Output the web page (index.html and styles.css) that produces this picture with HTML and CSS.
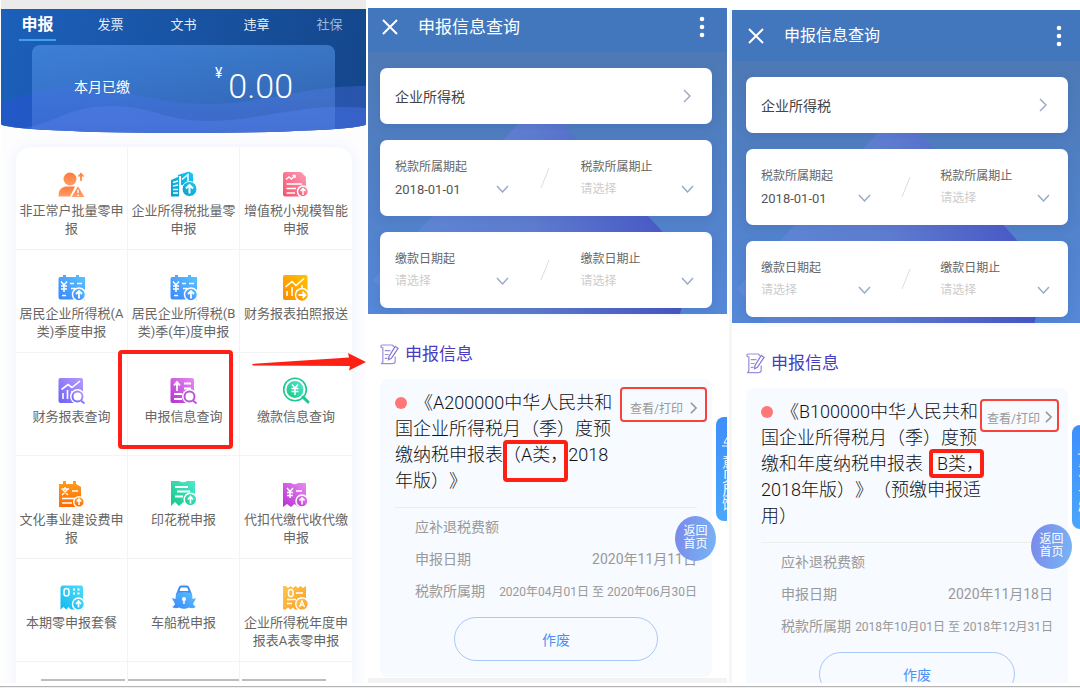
FILE: index.html
```html
<!DOCTYPE html>
<html lang="zh-CN">
<head>
  <meta charset="UTF-8" />
  <meta name="viewport" content="width=device-width, initial-scale=1.0"/>
  <title>申报信息查询</title>
  <link rel="stylesheet" href="styles.css">
</head>
<body>
  <svg class="defs" width="0" height="0" aria-hidden="true">
    <defs>
      <linearGradient id="orange" x1="0" y1="0" x2="0" y2="1"><stop offset="0" stop-color="#ff7a3c"/><stop offset="1" stop-color="#ff9f6a"/></linearGradient>
      <linearGradient id="cyan" x1="0" y1="1" x2="1" y2="0"><stop offset="0" stop-color="#0e9cc4"/><stop offset="1" stop-color="#16c8f5"/></linearGradient>
      <linearGradient id="pink" x1="0" y1="1" x2="1" y2="0"><stop offset="0" stop-color="#f8506c"/><stop offset="1" stop-color="#fb9db8"/></linearGradient>
      <linearGradient id="blue" x1="0" y1="1" x2="1" y2="0"><stop offset="0" stop-color="#3a86fb"/><stop offset="1" stop-color="#5cc4fd"/></linearGradient>
      <linearGradient id="amber" x1="0" y1="1" x2="1" y2="0"><stop offset="0" stop-color="#ff8a00"/><stop offset="1" stop-color="#ffc400"/></linearGradient>
      <linearGradient id="violet" x1="0" y1="1" x2="1" y2="0"><stop offset="0" stop-color="#6d62f7"/><stop offset="1" stop-color="#b79bfd"/></linearGradient>
      <linearGradient id="magenta" x1="0" y1="1" x2="1" y2="0"><stop offset="0" stop-color="#b62fd2"/><stop offset="1" stop-color="#e58df0"/></linearGradient>
      <linearGradient id="green" x1="0" y1="1" x2="1" y2="0"><stop offset="0" stop-color="#16c784"/><stop offset="1" stop-color="#4fe8d0"/></linearGradient>
      <linearGradient id="deep" x1="0" y1="1" x2="0" y2="0"><stop offset="0" stop-color="#ff6a00"/><stop offset="1" stop-color="#ff9d1f"/></linearGradient>
      <linearGradient id="sky" x1="0" y1="1" x2="1" y2="0"><stop offset="0" stop-color="#12b9ee"/><stop offset="1" stop-color="#4fdcf8"/></linearGradient>
      <linearGradient id="gold" x1="0" y1="0" x2="1" y2="1"><stop offset="0" stop-color="#fdc94a"/><stop offset="1" stop-color="#fb9a2c"/></linearGradient>
      <linearGradient id="peak" x1="0" y1="0" x2="1" y2="0"><stop offset="0" stop-color="#5f8bd8"/><stop offset="0.5" stop-color="#5f7dd0"/><stop offset="1" stop-color="#4654c6"/></linearGradient>
      <linearGradient id="sea" x1="0" y1="0" x2="1" y2="0"><stop offset="0" stop-color="#2457cc"/><stop offset="1" stop-color="#2f59b5"/></linearGradient>
    </defs>
  </svg>

  <div class="board">
    <section class="phone home">
      <header class="home-hero">
        <svg class="waves" viewBox="0 0 365 124" preserveAspectRatio="none" aria-hidden="true">
          <path d="M0 94C30 84 50 77 75 77C120 77 150 95 205 95C265 95 300 77 365 77V124H0Z" fill="url(#sea)" opacity=".75"/>
          <path d="M0 122C60 117 60 97 112 97C150 97 165 112 205 112C255 112 290 98 335 98C350 98 360 98 365 99V124H0Z" fill="#3f6ddb" opacity=".6"/>
        </svg>
        <nav class="tabs">
          <a href="#" class="tab active">申报</a>
          <a href="#" class="tab">发票</a>
          <a href="#" class="tab">文书</a>
          <a href="#" class="tab">违章</a>
          <a href="#" class="tab faded">社保</a>
        </nav>
        <div class="paid">
          <span class="paid-label">本月已缴</span>
          <span class="paid-sum"><sup>¥</sup>0.00</span>
        </div>
      </header>

      <div class="menu">
        <a href="#" class="item">
          <svg class="icon" viewBox="0 0 28 28"><g fill="url(#orange)"><circle cx="12" cy="8" r="6.5"/><path d="M.5 25.5C.5 18 4 15.500 10 15.500H17L12 25.500Z"/><path d="M20 15.500 26.500 26H13.500Z"/><path d="M23 1.500 26.500 5.500H24V10H22V5.500H19.500Z"/></g><path d="M20 18.500V22M20 23.500V25" stroke="#fff" stroke-width="1.500"/></svg>
          <span>非正常户批量零申报</span>
        </a>
        <a href="#" class="item">
          <svg class="icon" viewBox="0 0 28 28"><path d="M1 25.500V9L9 5.500V25.500ZM8 5.500V4L19 .5 23 3V14H11V5Z" fill="url(#cyan)"/><path d="M3 11.500 8 10M3 15 8 14M3 18.500H8M3 22H8M12 8.500 18 3.500V10" stroke="#fff" stroke-width="1.500" fill="none"/><circle cx="19.500" cy="18" r="7.500" fill="url(#cyan)" stroke="#fff"/><path d="M19.500 22.500V14.500M16 17.500 19.500 14 23 17.500" stroke="#fff" stroke-width="2" fill="none"/></svg>
          <span>企业所得税批量零申报</span>
        </a>
        <a href="#" class="item">
          <svg class="icon" viewBox="0 0 28 28"><path d="M3 1H19L24 6V25.500H3Q1 25.500 1 23.500V3Q1 1 3 1Z" fill="url(#pink)"/><path d="M4 8.500 7 6 9.500 8 13 4.500M10.500 4.500H13V7M4.500 13H20M4.500 17.500H14M4.500 22H13" stroke="#fff" stroke-width="1.500" fill="none"/><circle cx="21" cy="20.500" r="5.500" fill="url(#pink)" stroke="#fff" stroke-width="1.500"/><path d="M21 24V18M18.500 20 21 17.500 23.500 20" stroke="#fff" stroke-width="1.500" fill="none"/></svg>
          <span>增值税小规模智能申报</span>
        </a>

        <a href="#" class="item">
          <svg class="icon" viewBox="0 0 28 28"><path d="M2 3H5V1H8V3H18V1H21V3H27V25.500H3Q.5 25.500 .5 23V5Q.5 3 2 3Z" fill="url(#blue)"/><path d="M3 7.500 6 11 9 7.500M3 12H9M3 15H9M6 11V18M12 9.500H16M19 9.500H24M13 14.500H17M4 21.500H8" stroke="#fff" stroke-width="1.500" fill="none"/><circle cx="21" cy="20.500" r="6.500" fill="url(#blue)" stroke="#fff" stroke-width="1.500"/><path d="M21 24.500V17.500M18 20 21 17 24 20" stroke="#fff" stroke-width="1.800" fill="none"/></svg>
          <span>居民企业所得税(A类)季度申报</span>
        </a>
        <a href="#" class="item">
          <svg class="icon" viewBox="0 0 28 28"><path d="M2 3H5V1H8V3H18V1H21V3H27V25.500H3Q.5 25.500 .5 23V5Q.5 3 2 3Z" fill="url(#blue)"/><path d="M3 7.500 6 11 9 7.500M3 12H9M3 15H9M6 11V18M12 9.500H16M19 9.500H24M13 14.500H17M4 21.500H8" stroke="#fff" stroke-width="1.500" fill="none"/><circle cx="21" cy="20.500" r="6.500" fill="url(#blue)" stroke="#fff" stroke-width="1.500"/><path d="M21 24.500V17.500M18 20 21 17 24 20" stroke="#fff" stroke-width="1.800" fill="none"/></svg>
          <span>居民企业所得税(B类)季(年)度申报</span>
        </a>
        <a href="#" class="item">
          <svg class="icon" viewBox="0 0 28 28"><rect x="1" y="1" width="24.500" height="25" rx="2" fill="url(#amber)"/><path d="M3.500 13 10 7.500 14 11.500 22 4.500M5 17V22M10 13V22M15 16V22M20 11V15" stroke="#fff" stroke-width="1.600" fill="none"/><circle cx="20" cy="21" r="6.500" fill="url(#amber)" stroke="#fff" stroke-width="1.500"/><path d="M16.500 21H23M20.500 18 23.500 21 20.500 24" stroke="#fff" stroke-width="1.800" fill="none"/></svg>
          <span>财务报表拍照报送</span>
        </a>

        <a href="#" class="item">
          <svg class="icon" viewBox="0 0 28 28"><rect x=".5" y="1" width="24.500" height="25" rx="2" fill="url(#violet)"/><path d="M3.500 12.500 10 7.500 14 10.500 22 4M5 16V22M9.500 13V22M14 14V16" stroke="#fff" stroke-width="1.600" fill="none"/><circle cx="19.500" cy="19.500" r="7.500" fill="#fff"/><circle cx="19.500" cy="19.500" r="5" fill="none" stroke="url(#violet)" stroke-width="2"/><path d="M23 23.500 26.500 26.500" stroke="#8b7bf5" stroke-width="1.800"/></svg>
          <span>财务报表查询</span>
        </a>
        <a href="#" class="item boxed">
          <svg class="icon" viewBox="0 0 28 28"><rect x=".5" y="1" width="23.500" height="25" rx="2" fill="url(#magenta)"/><path d="M7 14V6M4 8.500 7 5 10 8.500M14 6.500H21M14 11.500H21M4 17H12M4 22H12" stroke="#fff" stroke-width="1.800" fill="none"/><circle cx="19.500" cy="19.500" r="7.500" fill="#fff"/><circle cx="19.500" cy="19.500" r="5" fill="none" stroke="#c04fd9" stroke-width="2"/><path d="M23 23.500 26.500 26.500" stroke="#c04fd9" stroke-width="1.800"/></svg>
          <span>申报信息查询</span>
        </a>
        <a href="#" class="item">
          <svg class="icon" viewBox="0 0 28 28"><circle cx="13" cy="12.500" r="11.300" fill="none" stroke="#1cc893" stroke-width="1.600"/><circle cx="13" cy="12.500" r="8.500" fill="url(#green)"/><path d="M10 7.500 13 11 16 7.500M9.500 11.500H16.500M9.500 14.500H16.500M13 11V18" stroke="#fff" stroke-width="1.500" fill="none"/><path d="M21 20 26 25" stroke="#1cc893" stroke-width="3" stroke-linecap="round"/></svg>
          <span>缴款信息查询</span>
          <svg class="arrow" viewBox="0 0 114 18" aria-hidden="true"><path d="M0 11 97 4.500 96 0 114 9 97 17.500 98 13 1 12.500Z" fill="#ff2015"/></svg>
        </a>

        <a href="#" class="item">
          <svg class="icon" viewBox="0 0 28 28"><path d="M1 4H5V1H8V4H15V1H18V4L23 7V27H1Z" fill="url(#deep)"/><path d="M3.500 9H11M7 7V9M10 9 4 15M5 10 10 15M14 11H20M4 18.500H19M4 23H14" stroke="#fff" stroke-width="1.400" fill="none"/><circle cx="21" cy="22" r="5.300" fill="url(#deep)" stroke="#fff" stroke-width="1.500"/><path d="M21 25V20M18.800 21.500 21 19 23.200 21.500" stroke="#fff" stroke-width="1.500" fill="none"/></svg>
          <span>文化事业建设费申报</span>
        </a>
        <a href="#" class="item">
          <svg class="icon" viewBox="0 0 28 28"><path d="M1 1H9Q13 3.500 17 1H25V25L22 22 18 26 13.500 22 9 26 5 22 1 26Z" fill="url(#green)"/><path d="M5 7H18M7 11.500H20M5 16.500H13" stroke="#fff" stroke-width="1.800" fill="none"/><circle cx="20.500" cy="19.500" r="6.300" fill="url(#green)" stroke="#fff" stroke-width="1.500"/><path d="M20.500 23.500V17M18 19.500 20.500 16.500 23 19.500" stroke="#fff" stroke-width="1.700" fill="none"/></svg>
          <span>印花税申报</span>
        </a>
        <a href="#" class="item">
          <svg class="icon" viewBox="0 0 28 28"><path d="M1 3H9Q12.500 5.500 16 3H24V26L20 24 16.500 27 12.500 24 9 27 5 24 1 27Z" fill="url(#magenta)"/><path d="M5 8 8 11.500 11 8M5 12.500H11M5 15.500H11M8 11V18M14 11H20" stroke="#fff" stroke-width="1.500" fill="none"/><circle cx="20" cy="21" r="6" fill="url(#magenta)" stroke="#fff" stroke-width="1.500"/><path d="M20 24.500V18.500M17.500 20.500 20 18 22.500 20.500" stroke="#fff" stroke-width="1.600" fill="none"/></svg>
          <span>代扣代缴代收代缴申报</span>
        </a>

        <a href="#" class="item">
          <svg class="icon" viewBox="0 0 28 28"><path d="M5 2.500H23Q25 2.500 25 4.500V26.500H13L10.500 24 8 26.500 5.500 24 2.500 26.500V5Q2.500 2.500 5 2.500Z" fill="url(#sky)"/><rect x="6" y="5.500" width="5" height="7.500" rx="2.500" fill="none" stroke="#fff" stroke-width="1.500"/><path d="M15 6.500H17M19.500 6.500H21.500M15 10.500H17M19.500 10.500H21.500" stroke="#fff" stroke-width="1.800"/><circle cx="20.500" cy="21" r="6" fill="url(#sky)" stroke="#fff" stroke-width="1.500"/><path d="M20.500 24.500V18.500M18 21 20.500 18 23 21" stroke="#fff" stroke-width="1.700" fill="none"/></svg>
          <span>本期零申报套餐</span>
        </a>
        <a href="#" class="item">
          <svg class="icon" viewBox="0 0 28 28"><path d="M8 9 9.500 5Q10 3.500 11.500 3.500H16.500Q18 3.500 18.500 5L20 9Z" fill="none" stroke="#3b8af5" stroke-width="2"/><path d="M6 10 14 9 22 10 22.500 16 26 15 23 21Q25 24 26 24 23 26 19 24.500 14 27 9 24.500 5 26 2 24 4 24 5 21L2 15 5.500 16Z" fill="url(#blue)"/><circle cx="14" cy="16" r="2" fill="#fff"/><path d="M14 17V21" stroke="#fff" stroke-width="1.500"/></svg>
          <span>车船税申报</span>
        </a>
        <a href="#" class="item">
          <svg class="icon" viewBox="0 0 28 28"><path d="M1 3H4L6 5 8.500 3 11 5 13.500 3 16 5 18.500 3 21 5 24 3V26.500H13L11 24.500 8.500 26.500 6 24.500 3.500 26.500H1Z" fill="url(#gold)"/><rect x="6.500" y="6.500" width="4.500" height="7" rx="2.200" fill="none" stroke="#fff" stroke-width="1.400"/><path d="M14 10H21M5 16.500H14M5 20.500H10" stroke="#fff" stroke-width="1.600"/><circle cx="20" cy="21" r="6.300" fill="url(#gold)" stroke="#fff" stroke-width="1.400"/><path d="M17.500 24 20 18 22.500 24M18.500 22.200H21.500" stroke="#fff" stroke-width="1.300" fill="none"/></svg>
          <span>企业所得税年度申报表A表零申报</span>
        </a>

        <div class="item last"><span class="bar bar-start"></span></div>
        <div class="item last"><span class="bar"></span></div>
        <div class="item last"><span class="bar bar-end"></span></div>
      </div>
    </section>

    <section class="phone query">
      <header class="bar-top">
        <button class="close" aria-label="关闭"><svg viewBox="0 0 16 16" width="16" height="16"><path d="M1 1 15 15M15 1 1 15" stroke="#fff" stroke-width="2"/></svg></button>
        <h1>申报信息查询</h1>
        <button class="more" aria-label="更多"><svg viewBox="0 0 6 22" width="6" height="22"><g fill="#fff"><circle cx="3" cy="3" r="2.300"/><circle cx="3" cy="11" r="2.300"/><circle cx="3" cy="19" r="2.300"/></g></svg></button>
      </header>
      <form class="filters">
        <svg class="peak" viewBox="0 0 359 262" preserveAspectRatio="none" aria-hidden="true"><path d="M150 72Q172 40 196 74L293 178 322 222 312 262H37L5 228Z" fill="url(#peak)"/></svg>
        <button type="button" class="card tax">企业所得税<svg viewBox="0 0 8 14" width="8" height="14"><path d="M1 1 7 7 1 13" fill="none" stroke="#9aacc6" stroke-width="1.500"/></svg></button>
        <div class="card range">
          <div class="field">
            <label for="a1">税款所属期起</label>
            <div class="pick"><select id="a1"><option>2018-01-01</option></select><svg viewBox="0 0 13 8" width="13" height="8"><path d="M1 1 6.500 7 12 1" fill="none" stroke="#9aacc6" stroke-width="1.500"/></svg></div>
          </div>
          <svg class="slash" viewBox="0 0 10 20" width="10" height="20"><path d="M9 0 1 20" stroke="#ddd"/></svg>
          <div class="field">
            <label for="a2">税款所属期止</label>
            <div class="pick"><select id="a2" class="empty"><option>请选择</option></select><svg viewBox="0 0 13 8" width="13" height="8"><path d="M1 1 6.500 7 12 1" fill="none" stroke="#9aacc6" stroke-width="1.500"/></svg></div>
          </div>
        </div>
        <div class="card range">
          <div class="field">
            <label for="a3">缴款日期起</label>
            <div class="pick"><select id="a3" class="empty"><option>请选择</option></select><svg viewBox="0 0 13 8" width="13" height="8"><path d="M1 1 6.500 7 12 1" fill="none" stroke="#9aacc6" stroke-width="1.500"/></svg></div>
          </div>
          <svg class="slash" viewBox="0 0 10 20" width="10" height="20"><path d="M9 0 1 20" stroke="#ddd"/></svg>
          <div class="field">
            <label for="a4">缴款日期止</label>
            <div class="pick"><select id="a4" class="empty"><option>请选择</option></select><svg viewBox="0 0 13 8" width="13" height="8"><path d="M1 1 6.500 7 12 1" fill="none" stroke="#9aacc6" stroke-width="1.500"/></svg></div>
          </div>
        </div>
      </form>
      <div class="results">
        <h2><svg viewBox="0 0 20 22" width="19" height="21"><path d="M14 3V2Q14 1 13 1H3Q1 1 1 2.500T3 4V18Q3 20.500 1 20.500H13Q16 20.500 16 18V13M5 7H11M5 11H9M5 15H8" fill="none" stroke="#9a8fdc" stroke-width="1.300"/><path d="M16 2.500 19 4.500 12 15 9 16.500 9.500 13Z" fill="none" stroke="#8378d6" stroke-width="1.300"/></svg>申报信息</h2>
        <article class="result">
          <div class="head">
            <h3><i class="dot"></i>《A200000中华人民共和<br>国企业所得税月（季）度预<br>缴纳税申报表<span class="mark mark-tall">（A类，</span>2018<br>年版）》</h3>
            <button class="view">查看/打印<svg viewBox="0 0 8 14" width="7" height="12"><path d="M1 1 7 7 1 13" fill="none" stroke="#999" stroke-width="1.800"/></svg></button>
          </div>
          <div class="detail">
            <dl>
              <div><dt>应补退税费额</dt><dd></dd></div>
              <div><dt>申报日期</dt><dd>2020年11月11日</dd></div>
              <div><dt>税款所属期</dt><dd class="period">2020年04月01日 至 2020年06月30日</dd></div>
            </dl>
            <button class="void">作废</button>
          </div>
        </article>
      </div>
      <div class="strip"></div>
      <button class="feedback"><svg viewBox="0 0 12 12" width="12" height="12"><path d="M6 1 2 8H10M0 11H12" fill="none" stroke="#fff"/></svg>意见反馈</button>
      <a href="#" class="home-link">返回<br>首页</a>
    </section>

    <section class="phone query right">
      <header class="bar-top">
        <button class="close" aria-label="关闭"><svg viewBox="0 0 16 16" width="16" height="16"><path d="M1 1 15 15M15 1 1 15" stroke="#fff" stroke-width="2"/></svg></button>
        <h1>申报信息查询</h1>
        <button class="more" aria-label="更多"><svg viewBox="0 0 6 22" width="6" height="22"><g fill="#fff"><circle cx="3" cy="3" r="2.300"/><circle cx="3" cy="11" r="2.300"/><circle cx="3" cy="19" r="2.300"/></g></svg></button>
      </header>
      <form class="filters">
        <svg class="peak" viewBox="0 0 359 262" preserveAspectRatio="none" aria-hidden="true"><path d="M150 72Q172 40 196 74L293 178 322 222 312 262H37L5 228Z" fill="url(#peak)"/></svg>
        <button type="button" class="card tax">企业所得税<svg viewBox="0 0 8 14" width="8" height="14"><path d="M1 1 7 7 1 13" fill="none" stroke="#9aacc6" stroke-width="1.500"/></svg></button>
        <div class="card range">
          <div class="field">
            <label for="b1">税款所属期起</label>
            <div class="pick"><select id="b1"><option>2018-01-01</option></select><svg viewBox="0 0 13 8" width="13" height="8"><path d="M1 1 6.500 7 12 1" fill="none" stroke="#9aacc6" stroke-width="1.500"/></svg></div>
          </div>
          <svg class="slash" viewBox="0 0 10 20" width="10" height="20"><path d="M9 0 1 20" stroke="#ddd"/></svg>
          <div class="field">
            <label for="b2">税款所属期止</label>
            <div class="pick"><select id="b2" class="empty"><option>请选择</option></select><svg viewBox="0 0 13 8" width="13" height="8"><path d="M1 1 6.500 7 12 1" fill="none" stroke="#9aacc6" stroke-width="1.500"/></svg></div>
          </div>
        </div>
        <div class="card range">
          <div class="field">
            <label for="b3">缴款日期起</label>
            <div class="pick"><select id="b3" class="empty"><option>请选择</option></select><svg viewBox="0 0 13 8" width="13" height="8"><path d="M1 1 6.500 7 12 1" fill="none" stroke="#9aacc6" stroke-width="1.500"/></svg></div>
          </div>
          <svg class="slash" viewBox="0 0 10 20" width="10" height="20"><path d="M9 0 1 20" stroke="#ddd"/></svg>
          <div class="field">
            <label for="b4">缴款日期止</label>
            <div class="pick"><select id="b4" class="empty"><option>请选择</option></select><svg viewBox="0 0 13 8" width="13" height="8"><path d="M1 1 6.500 7 12 1" fill="none" stroke="#9aacc6" stroke-width="1.500"/></svg></div>
          </div>
        </div>
      </form>
      <div class="results">
        <h2><svg viewBox="0 0 20 22" width="19" height="21"><path d="M14 3V2Q14 1 13 1H3Q1 1 1 2.500T3 4V18Q3 20.500 1 20.500H13Q16 20.500 16 18V13M5 7H11M5 11H9M5 15H8" fill="none" stroke="#9a8fdc" stroke-width="1.300"/><path d="M16 2.500 19 4.500 12 15 9 16.500 9.500 13Z" fill="none" stroke="#8378d6" stroke-width="1.300"/></svg>申报信息</h2>
        <article class="result">
          <div class="head">
            <h3><i class="dot"></i>《B100000中华人民共和<br>国企业所得税月（季）度预<br>缴和年度纳税申报表<span class="mark-gap"></span><span class="mark">B类，</span><br>2018年版）》（预缴申报适<br>用）</h3>
            <button class="view">查看/打印<svg viewBox="0 0 8 14" width="7" height="12"><path d="M1 1 7 7 1 13" fill="none" stroke="#999" stroke-width="1.800"/></svg></button>
          </div>
          <div class="detail">
            <dl>
              <div><dt>应补退税费额</dt><dd class="due">¥0</dd></div>
              <div><dt>申报日期</dt><dd>2020年11月18日</dd></div>
              <div><dt>税款所属期</dt><dd class="period">2018年10月01日 至 2018年12月31日</dd></div>
            </dl>
            <button class="void">作废</button>
          </div>
        </article>
      </div>
      <button class="feedback"><svg viewBox="0 0 12 12" width="12" height="12"><path d="M6 1 2 8H10M0 11H12" fill="none" stroke="#fff"/></svg>意见反馈</button>
      <a href="#" class="home-link">返回<br>首页</a>
    </section>
  </div>
  <footer class="edge"></footer>
</body>
</html>
```
FILE: styles.css
```css
:root {
  --red: #ff2015;
  --topbar: #4377bd;
  --text: #444;
  --muted: #999;
}

* {
  box-sizing: border-box;
  margin: 0;
  padding: 0;
  font-family: Roboto, "Noto Sans CJK SC", sans-serif;
}

body {
  display: flex;
  flex-direction: column;
  height: 100vh;
  overflow: hidden;
  background: #fff;
  text-spacing-trim: space-all;
}

a {
  color: inherit;
  text-decoration: none;
}

button {
  border: 0;
  background: none;
  cursor: pointer;
}

svg {
  display: block;
  flex-shrink: 0;
}

.defs {
  position: absolute;
}

.board {
  flex: 1;
  min-height: 0;
  display: grid;
  grid-template-columns: 365fr 359fr 351fr;
  grid-template-rows: 100%;
  column-gap: 2px;
  padding-left: 1px;
}

.phone {
  position: relative;
  overflow: hidden;
}

.edge {
  height: 5px;
  background: linear-gradient(#fff 3px, #b4b4b4 3px, #b4b4b4 4px, #f0f0f0 4px);
}

/* home */
.home {
  border-top: 9px solid #ebebeb;
  background: #fdfdfe;
}

.home-hero {
  position: relative;
  height: 124px;
  overflow: hidden;
  border-radius: 0 0 50% 50% / 0 0 9px 9px;
  background: linear-gradient(100deg, #1c60bb, #14468a);
}

.waves {
  position: absolute;
  inset: 0;
  width: 100%;
  height: 100%;
}

.tabs {
  position: relative;
  display: flex;
  height: 32px;
}

.tab {
  flex: 1;
  text-align: center;
  font-size: 13px;
  line-height: 32px;
  color: #e4ecf8;
}

.tab.active {
  font-size: 16px;
  font-weight: bold;
  color: #fff;
}

.tab.active::after {
  content: "";
  display: block;
  width: 37px;
  height: 2px;
  margin: -2px auto 0;
  background: #3fa0ee;
}

.tab.faded {
  color: #9db6db;
}

.paid {
  position: relative;
  display: flex;
  align-items: center;
  justify-content: space-between;
  height: 90px;
  margin: 4px 31px 0;
  padding: 0 42px 9px;
  border-radius: 8px;
  background: linear-gradient(rgba(88, 155, 240, 0.55), rgba(110, 145, 240, 0.3));
  color: #fff;
}

.paid-label {
  font-size: 14px;
}

.paid-sum {
  display: flex;
  align-items: center;
  gap: 6px;
  font-size: 34px;
  font-weight: 300;
  line-height: 40px;
}

.paid-sum sup {
  font-size: 14px;
  line-height: 14px;
  font-weight: 400;
  align-self: flex-start;
}

.menu {
  display: grid;
  grid-template-columns: repeat(3, 1fr);
  grid-auto-rows: 103px;
  margin: 14px 14px 0 15px;
  background: #fff;
  border-radius: 15px 15px 0 0;
  box-shadow: 0 0 14px rgba(60, 120, 230, 0.09);
}

.item {
  position: relative;
  display: flex;
  flex-direction: column;
  align-items: center;
  gap: 3px;
  padding: 24px 3px 0;
  border-right: 1px solid #f3f3f3;
  border-bottom: 1px solid #f3f3f3;
  text-align: center;
  font-size: 13px;
  line-height: 18px;
  color: #666;
}

.item:nth-child(3n) {
  border-right: 0;
}

.icon {
  width: 28px;
  height: 28px;
}

/* red callout frame over the chosen entry */
.boxed::after {
  content: "";
  position: absolute;
  inset: -3px 6px 6px -10px;
  border: 4px solid var(--red);
  border-radius: 4px;
}

.arrow {
  position: absolute;
  top: 0;
  left: 12px;
  width: 114px;
  height: 18px;
}

.item.last {
  padding: 17px 0 0;
  align-items: stretch;
}

.bar {
  height: 2px;
  background: #bdbdbd;
}

.bar-start {
  margin-left: 25px;
  margin-right: 2px;
}

.bar-end {
  margin-left: 2px;
  margin-right: 26px;
}

/* query */
.query {
  margin-top: 8px;
  --left: 12px;
  --right: 15px;
}

.bar-top {
  display: flex;
  align-items: center;
  height: 44px;
  padding: 0 22px 7px 14px;
  background: var(--topbar);
}

.bar-top h1 {
  flex: 1;
  margin-left: 20px;
  font-size: 17px;
  font-weight: 400;
  line-height: 24px;
  color: #fff;
}

.filters {
  position: relative;
  display: flex;
  flex-direction: column;
  gap: 16px;
  padding: 16px var(--right) 6px var(--left);
  background: linear-gradient(#4d79b5, #5588d8);
}

.peak {
  position: absolute;
  inset: 0;
  width: 100%;
  height: 100%;
}

.card {
  position: relative;
  display: flex;
  align-items: center;
  justify-content: space-between;
  border-radius: 7px;
  background: #fff;
  box-shadow: 0 3px 10px rgba(40, 70, 140, 0.15);
}

.tax {
  height: 56px;
  padding: 0 21px 0 15px;
  font-size: 14px;
  color: var(--text);
}

.range {
  height: 76px;
  padding: 0 18px 0 15px;
}

.field {
  width: 38%;
}

.field label {
  display: block;
  font-size: 12px;
  line-height: 22px;
  color: #666;
}

.pick {
  display: flex;
  align-items: center;
  height: 22px;
}

.pick select {
  flex: 1;
  min-width: 0;
  appearance: none;
  border: 0;
  background: none;
  font-size: 13px;
  color: #555;
}

.pick select.empty {
  font-size: 12px;
  color: #ccc;
}

.results {
  padding: 28px var(--right) 0 var(--left);
}

.results h2 {
  display: flex;
  align-items: center;
  gap: 6px;
  font-size: 17px;
  font-weight: 400;
  line-height: 24px;
  color: #4a3cc0;
}

.result {
  margin-top: 13px;
  padding-bottom: 16px;
  border-radius: 8px;
  background: #f7faff;
}

.strip {
  height: 6px;
  margin-top: 1px;
  background: #f3f3f3;
}

.head {
  display: flex;
  align-items: flex-start;
  justify-content: space-between;
  padding: 8px 5px 0 15px;
}

.head h3 {
  flex: 1;
  min-width: 0;
  padding-top: 3px;
  white-space: nowrap;
  font-size: 18px;
  font-weight: 300;
  line-height: 26px;
  color: #111;
}

.dot {
  display: inline-block;
  width: 12px;
  height: 12px;
  margin-right: 8px;
  border-radius: 50%;
  background: #ff7676;
}

.mark {
  position: relative;
}

.mark::after {
  content: "";
  position: absolute;
  inset: -4px 0 -4px -8px;
  border: 4px solid var(--red);
  border-radius: 4px;
}

.mark-tall::after {
  inset: -4px 0 -17px 0;
}

.mark-gap {
  display: inline-block;
  width: 14px;
}

.view {
  display: flex;
  align-items: center;
  gap: 7px;
  height: 35px;
  padding: 6px 8px 0;
  border: 2px solid #f9423a;
  border-radius: 4px;
  font-size: 12px;
  color: var(--muted);
}

.detail {
  padding: 0 15px 0 35px;
}

.detail dl {
  margin: 13px 0 11px -20px;
  padding: 2px 0 0 20px;
  border-top: 1px solid #eee;
}

.detail dl div {
  display: flex;
  align-items: center;
  justify-content: space-between;
  height: 32px;
  font-size: 14px;
  color: var(--muted);
  white-space: nowrap;
}

.detail .period {
  font-size: 12px;
}

.detail .due {
  color: #f55;
}

.void {
  display: block;
  width: 72%;
  height: 44px;
  margin: 0 auto;
  border: 1px solid #a9c8fb;
  border-radius: 22px;
  font-size: 14px;
  color: #4a90f5;
}

.feedback {
  position: absolute;
  top: 409px;
  right: -13px;
  display: flex;
  align-items: center;
  gap: 8px;
  width: 24px;
  height: 104px;
  padding-top: 18px;
  border-radius: 8px;
  background: linear-gradient(#3f8ffb, #4aa6fb);
  writing-mode: vertical-rl;
  font-size: 14px;
  color: #fff;
}

.home-link {
  position: absolute;
  top: 508px;
  right: 11px;
  width: 41px;
  height: 45px;
  padding-top: 9px;
  border-radius: 50%;
  background: linear-gradient(100deg, #7a88ea, #78b6f5);
  text-align: center;
  font-size: 12px;
  line-height: 13px;
  color: #fff;
}

/* right phone */
.right {
  --left: 14px;
  --right: 12px;
  margin-top: 10px;
  border-left: 3px solid #f6f6f6;
}

.right .bar-top {
  height: 51px;
  padding: 0 18px 0 16px;
}

.right .bar-top h1 {
  font-size: 16px;
}

.right .head {
  padding-right: 9px;
}

.right .view {
  height: 33px;
  margin-top: 3px;
  padding: 3px 5px 0;
  gap: 5px;
}

.right .feedback {
  top: 415px;
  right: -16px;
}

.right .home-link {
  top: 514px;
  right: 8px;
}
```
